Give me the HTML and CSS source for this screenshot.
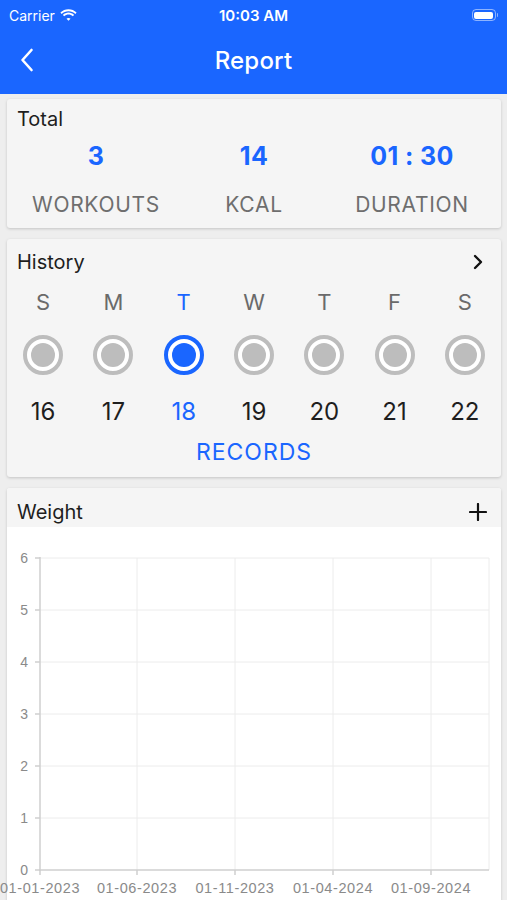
FILE: index.html
```html
<!DOCTYPE html>
<html>
<head>
<meta charset="utf-8">
<link rel="stylesheet" href="styles.css">
</head>
<body>
<div class="top">
  <div class="status">
    <div class="carrier">Carrier
      <svg class="wifi" width="17" height="12" viewBox="0 0 17 12"><path d="M8.5 2.2c2.6 0 5 1 6.8 2.7l1.3-1.4C14.4 1.4 11.6.2 8.5.2S2.6 1.4.4 3.5l1.3 1.4C3.5 3.2 5.9 2.2 8.5 2.2z" fill="#fff"/><path d="M8.5 5.6c1.6 0 3.1.6 4.3 1.7l1.3-1.4C12.6 4.5 10.6 3.6 8.5 3.6S4.4 4.5 2.9 5.9l1.3 1.4c1.2-1.1 2.7-1.700 4.3-1.7z" fill="#fff"/><path d="M8.5 8.9c.8 0 1.5.3 2 .8L8.5 11.8 6.5 9.7c.5-.5 1.2-.8 2-.8z" fill="#fff"/></svg>
    </div>
    <div class="time">10:03 AM</div>
    <div class="battery"><span class="batt-body"><span class="batt-fill"></span></span><span class="batt-tip"></span></div>
  </div>
  <div class="nav">
    <svg class="back" width="14" height="24" viewBox="0 0 14 24"><path d="M11.5 2 L2.5 12 L11.5 22" fill="none" stroke="#fff" stroke-width="2.6" stroke-linecap="round" stroke-linejoin="round"/></svg>
    <div class="title">Report</div>
  </div>
</div>

<div class="content">
  <div class="card total">
    <div class="card-title">Total</div>
    <div class="stats">
      <div class="stat"><div class="val">3</div><div class="lbl">WORKOUTS</div></div>
      <div class="stat"><div class="val">14</div><div class="lbl">KCAL</div></div>
      <div class="stat"><div class="val">01&nbsp;:&nbsp;30</div><div class="lbl">DURATION</div></div>
    </div>
  </div>

  <div class="card history">
    <div class="card-head">
      <div class="card-title">History</div>
      <svg class="chev" width="10" height="16" viewBox="0 0 10 16"><path d="M2 2 L8 8 L2 14" fill="none" stroke="#111" stroke-width="2.4" stroke-linecap="round" stroke-linejoin="round"/></svg>
    </div>
    <div class="week">
      <div class="day"><div class="dl">S</div><div class="ring"><span class="dot"></span></div><div class="dn">16</div></div>
      <div class="day"><div class="dl">M</div><div class="ring"><span class="dot"></span></div><div class="dn">17</div></div>
      <div class="day sel"><div class="dl">T</div><div class="ring"><span class="dot"></span></div><div class="dn">18</div></div>
      <div class="day"><div class="dl">W</div><div class="ring"><span class="dot"></span></div><div class="dn">19</div></div>
      <div class="day"><div class="dl">T</div><div class="ring"><span class="dot"></span></div><div class="dn">20</div></div>
      <div class="day"><div class="dl">F</div><div class="ring"><span class="dot"></span></div><div class="dn">21</div></div>
      <div class="day"><div class="dl">S</div><div class="ring"><span class="dot"></span></div><div class="dn">22</div></div>
    </div>
    <div class="records">RECORDS</div>
  </div>

  <div class="card weight">
    <div class="card-head whead">
      <div class="card-title">Weight</div>
      <svg class="plus" width="18" height="18" viewBox="0 0 18 18"><path d="M9 1 V17 M1 9 H17" stroke="#111" stroke-width="2.2" stroke-linecap="round"/></svg>
    </div>
    <div class="chart">
      <svg width="494" height="380" viewBox="0 0 494 380" class="chart-svg" overflow="visible">
        <g stroke="#ececec" stroke-width="1">
          <line x1="33" y1="31" x2="482" y2="31"/>
          <line x1="33" y1="83" x2="482" y2="83"/>
          <line x1="33" y1="135" x2="482" y2="135"/>
          <line x1="33" y1="187" x2="482" y2="187"/>
          <line x1="33" y1="239" x2="482" y2="239"/>
          <line x1="33" y1="291" x2="482" y2="291"/>
          <line x1="130" y1="31" x2="130" y2="343"/>
          <line x1="228" y1="31" x2="228" y2="343"/>
          <line x1="326" y1="31" x2="326" y2="343"/>
          <line x1="424" y1="31" x2="424" y2="343"/>
          <line x1="482" y1="31" x2="482" y2="343"/>
        </g>
        <g stroke="#cfcfcf" stroke-width="1.5">
          <line x1="33" y1="30" x2="33" y2="344"/>
          <line x1="32" y1="343" x2="482" y2="343"/>
          <line x1="28" y1="31" x2="33" y2="31"/>
          <line x1="28" y1="83" x2="33" y2="83"/>
          <line x1="28" y1="135" x2="33" y2="135"/>
          <line x1="28" y1="187" x2="33" y2="187"/>
          <line x1="28" y1="239" x2="33" y2="239"/>
          <line x1="28" y1="291" x2="33" y2="291"/>
          <line x1="28" y1="343" x2="33" y2="343"/>
          <line x1="33" y1="343" x2="33" y2="348"/>
          <line x1="130" y1="343" x2="130" y2="348"/>
          <line x1="228" y1="343" x2="228" y2="348"/>
          <line x1="326" y1="343" x2="326" y2="348"/>
          <line x1="424" y1="343" x2="424" y2="348"/>
        </g>
        <g fill="#8a8a8a" font-family="'Liberation Sans', Arial, sans-serif" font-size="14" text-anchor="end">
          <text x="21" y="36">6</text>
          <text x="21" y="88">5</text>
          <text x="21" y="140">4</text>
          <text x="21" y="192">3</text>
          <text x="21" y="244">2</text>
          <text x="21" y="296">1</text>
          <text x="21" y="348">0</text>
        </g>
        <g fill="#8a8a8a" font-family="'Liberation Sans', Arial, sans-serif" font-size="14.5" letter-spacing="0.6" text-anchor="middle">
          <text x="33" y="366">01-01-2023</text>
          <text x="130" y="366">01-06-2023</text>
          <text x="228" y="366">01-11-2023</text>
          <text x="326" y="366">01-04-2024</text>
          <text x="424" y="366">01-09-2024</text>
        </g>
      </svg>
    </div>
  </div>
</div>
</body>
</html>
```

FILE: styles.css
```css
* { box-sizing: border-box; }
html, body { margin: 0; padding: 0; }
body {
  width: 507px;
  height: 900px;
  overflow: hidden;
  background: #eeeeee;
  font-family: "Inter", "Liberation Sans", Arial, sans-serif;
  color: #1a1a1a;
}
.top {
  background: #1a66ff;
  height: 94px;
  color: #fff;
}
.status {
  height: 30px;
  display: flex;
  align-items: center;
  justify-content: space-between;
  padding: 0 9px 0 9px;
  position: relative;
}
.carrier {
  font-size: 14px;
  display: flex;
  align-items: center;
  gap: 5px;
  width: 120px;
}
.time {
  font-size: 15px;
  font-weight: 600;
}
.battery {
  width: 120px;
  display: flex;
  justify-content: flex-end;
  align-items: center;
}
.batt-body {
  width: 24px;
  height: 12px;
  border: 1px solid rgba(255,255,255,0.5);
  border-radius: 4px;
  padding: 1.5px;
  display: flex;
}
.batt-fill { flex: 1; background: #fff; border-radius: 2px; }
.batt-tip { width: 1.5px; height: 4px; background: rgba(255,255,255,0.5); margin-left: 1px; border-radius: 0 1px 1px 0; }
.nav {
  height: 64px;
  display: flex;
  align-items: center;
  justify-content: center;
  position: relative;
}
.back { position: absolute; left: 20px; top: 18px; }
.title { font-size: 24px; font-weight: 500; margin-top: -4px; letter-spacing: 0.2px; }

.content {
  padding: 5px 6px 0 7px;
  display: flex;
  flex-direction: column;
  gap: 11px;
}
.card {
  background: #f5f5f5;
  border-radius: 3px;
  box-shadow: 0 1px 3px rgba(0,0,0,0.18);
}
.card-title { font-size: 20px; color: #1e1e1e; }
.total { padding: 8px 10px 9px 10px; height: 129px; }
.stats { display: grid; grid-template-columns: repeat(3, 1fr); margin-top: 10px; }
.stat { display: flex; flex-direction: column; align-items: center; }
.val { font-size: 25px; font-weight: 700; color: #1a66ff; height: 36px; letter-spacing: 0.4px; }
.lbl { font-size: 21px; color: #6e6e6e; margin-top: 15px; letter-spacing: 0.7px; }

.history { height: 238px; padding: 11px 0 0 0; }
.card-head { display: flex; justify-content: space-between; align-items: center; padding: 0 10px; }
.chev { margin-right: 8px; }
.week { display: grid; grid-template-columns: repeat(7, 1fr); margin-top: 15px; padding: 0 1px; }
.day { display: flex; flex-direction: column; align-items: center; }
.dl { font-size: 22px; color: #6a6a6a; height: 28px; }
.ring {
  margin-top: 18px;
  width: 40px; height: 40px;
  border-radius: 50%;
  border: 4px solid #bdbdbd;
  background: #fff;
  display: flex; align-items: center; justify-content: center;
}
.dot { width: 24px; height: 24px; border-radius: 50%; background: #bdbdbd; }
.dn { font-size: 24px; color: #1e1e1e; margin-top: 22px; }
.sel .dl, .sel .dn { color: #1a66ff; }
.sel .ring { border-color: #1a66ff; }
.sel .dot { background: #1a66ff; }
.records { text-align: center; font-size: 23px; color: #1a66ff; margin-top: 12px; letter-spacing: 1px; }

.weight { height: 440px; background: #fff; }
.whead { background: #f5f5f5; height: 39px; padding-top: 8px; align-items: center; border-radius: 3px 3px 0 0; }
.plus { margin-right: 4px; }
.chart { position: relative; }
.chart-svg { display: block; }
```
